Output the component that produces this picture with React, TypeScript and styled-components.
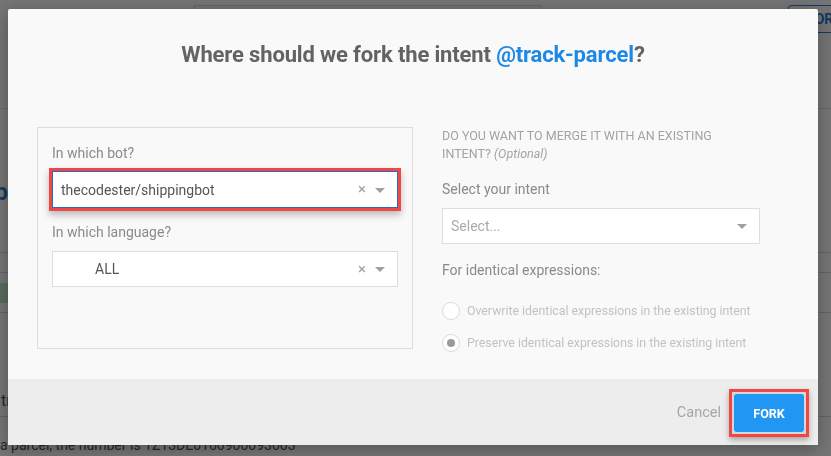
import React from "react";
import styled, { createGlobalStyle } from "styled-components";

const Global = createGlobalStyle`
  html, body { margin: 0; padding: 0; }
  body {
    width: 831px;
    height: 456px;
    overflow: hidden;
    background: #ffffff;
    font-family: Roboto, "Noto Sans", Arial, sans-serif;
  }
`;

/* ---------- background page (under the overlay) ---------- */

const Page = styled.div`
  width: 831px;
  height: 456px;
  background: #ffffff;
  display: flex;
  flex-direction: column;
  overflow: hidden;
`;

const PageHeader = styled.div`
  display: flex;
  align-items: flex-start;
  height: 118px;
  padding-top: 5px;
  box-sizing: border-box;
  border-bottom: 1px solid #e4e4e4;
  background: #fdfdfd;
`;

const HeaderLeft = styled.div`
  width: 194px;
  margin-left: -60px;
  display: flex;
  flex-direction: column;
  gap: 8px;
`;

const PageTitle = styled.div`
  font-size: 24px;
  font-weight: 700;
  color: #2a7fd0;
  line-height: 30px;
`;

const PageSub = styled.div`
  font-size: 14px;
  color: #777;
  line-height: 18px;
`;

const SearchBox = styled.div`
  margin-left: 60px;
  width: 347px;
  height: 40px;
  border: 1px solid #dcdcdc;
  box-sizing: border-box;
`;

const OutlineButton = styled.div`
  margin-left: auto;
  margin-right: -40px;
  width: 83px;
  height: 28px;
  border: 1px solid #2a7fd0;
  border-radius: 3px;
  color: #2a7fd0;
  font-weight: 700;
  font-size: 14px;
  display: flex;
  align-items: center;
  padding-left: 18px;
  box-sizing: border-box;
`;

const PageBody = styled.div`
  display: flex;
  flex-direction: column;
  padding-top: 68px;
  margin-left: -40px;
`;

const SectionTitle = styled.div`
  font-size: 24px;
  font-weight: 700;
  color: #2a7fd0;
  line-height: 30px;
`;

const SectionSub = styled.div`
  font-size: 16px;
  color: #777;
  margin-top: 2px;
  line-height: 20px;
`;

const Row = styled.div<{ $h: number; $align?: string }>`
  height: ${(p) => p.$h}px;
  border-bottom: 1px solid #d8d8d8;
  display: flex;
  align-items: ${(p) => p.$align ?? "center"};
  padding-left: 40px;
  font-size: 16px;
  color: #555;
  width: 900px;
  box-sizing: border-box;
`;

const RowText = styled.span`
  padding: 0 0 6px 1px;
`;

const Tag = styled.span`
  background: #c9e7c9;
  color: #3a6a3a;
  padding: 2px 10px;
  font-size: 14px;
`;

const BottomText = styled.div`
  font-size: 14px;
  color: #555;
  padding-left: 40px;
  line-height: 22px;
  margin-top: 17px;
  white-space: nowrap;
`;

const Overlay = styled.div`
  position: fixed;
  inset: 0;
  background: rgba(0, 0, 0, 0.54);
`;

/* ---------- modal ---------- */

const Modal = styled.div`
  position: fixed;
  left: 8px;
  top: 9px;
  width: 810px;
  height: 436px;
  background: #f9f9f9;
  border-radius: 2px;
  box-shadow: 0 4px 18px rgba(0, 0, 0, 0.3);
  display: flex;
  flex-direction: column;
`;

const ModalBody = styled.div`
  flex: 1;
  display: flex;
  flex-direction: column;
  padding: 33px 0 0 29px;
`;

const Title = styled.h2`
  margin: 0;
  font-size: 22px;
  line-height: 26px;
  font-weight: 700;
  color: #636363;
  text-align: center;
  padding-right: 29px;
  letter-spacing: -0.15px;
`;

const Accent = styled.span`
  color: #1e88e5;
`;

const Columns = styled.div`
  display: flex;
  margin-top: 59px;
  gap: 29px;
`;

const LeftBox = styled.div`
  width: 376px;
  height: 222px;
  box-sizing: border-box;
  border: 1px solid #dcdcdc;
  padding: 17px 14px 0 14px;
  display: flex;
  flex-direction: column;
`;

const FieldLabel = styled.div<{ $top?: number }>`
  font-size: 14px;
  line-height: 16px;
  color: #8a8a8a;
  margin-top: ${(p) => p.$top ?? 0}px;
`;

const SelectBox = styled.div<{ $focused?: boolean; $w?: number; $top?: number }>`
  width: ${(p) => p.$w ?? 346}px;
  height: ${(p) => (p.$focused ? 37 : 36)}px;
  margin-top: ${(p) => p.$top ?? 0}px;
  box-sizing: border-box;
  background: #ffffff;
  border: 1px solid ${(p) => (p.$focused ? "#1f6fc5" : "#dedede")};
  display: flex;
  align-items: center;
  padding: 0 12px 0 8px;
  box-shadow: ${(p) =>
    p.$focused
      ? "0 0 0 3px #f04646, 0 4px 7px 3px rgba(0,0,0,0.25)"
      : "none"};
`;

const SelectValue = styled.span<{ $indent?: number; $placeholder?: boolean }>`
  flex: 1;
  font-size: 14px;
  color: ${(p) => (p.$placeholder ? "#aaaaaa" : "#555555")};
  padding-left: ${(p) => p.$indent ?? 0}px;
`;

const Clear = styled.span`
  font-size: 15px;
  color: #a0a0a0;
  margin-right: 9px;
  line-height: 1;
`;

const Arrow = styled.span`
  width: 0;
  height: 0;
  border-left: 5px solid transparent;
  border-right: 5px solid transparent;
  border-top: 5px solid #a0a0a0;
  margin-top: 1px;
`;

const RightCol = styled.div`
  width: 318px;
  display: flex;
  flex-direction: column;
`;

const MergeHeading = styled.div`
  font-size: 12.5px;
  line-height: 18px;
  color: #a3a3a3;
  text-transform: uppercase;
`;

const Optional = styled.i`
  text-transform: none;
`;

const RadioRow = styled.div<{ $top: number }>`
  display: flex;
  align-items: center;
  gap: 7px;
  margin-top: ${(p) => p.$top}px;
`;

const RadioCircle = styled.span<{ $checked?: boolean }>`
  width: 18px;
  height: 18px;
  box-sizing: border-box;
  border-radius: 50%;
  border: 1px solid #dadada;
  background: #ffffff;
  display: flex;
  align-items: center;
  justify-content: center;
  &::after {
    content: "";
    width: 8px;
    height: 8px;
    border-radius: 50%;
    background: #9a9a9a;
    display: ${(p) => (p.$checked ? "block" : "none")};
  }
`;

const RadioText = styled.span`
  font-size: 12.3px;
  color: #c2c2c2;
`;

const Footer = styled.div`
  height: 66px;
  background: #ededed;
  display: flex;
  align-items: center;
  justify-content: flex-end;
  padding-right: 9px;
  gap: 8px;
`;

const CancelButton = styled.span`
  font-size: 14.5px;
  color: #a6a6a6;
  margin-top: 1px;
`;

const HighlightFrame = styled.div`
  border: 3px solid #f04646;
  padding: 2px;
  background: #d6d6d6;
  box-shadow: 0 3px 6px rgba(0, 0, 0, 0.3);
  margin-top: 2px;
`;

const PrimaryButton = styled.button`
  width: 70px;
  height: 38px;
  border: none;
  border-radius: 3px;
  background: #2196f3;
  color: #ffffff;
  font-family: Roboto, Arial, sans-serif;
  font-weight: 700;
  font-size: 12.5px;
  display: block;
`;

export default function App() {
  return (
    <>
      <Global />
      <Page>
        <PageHeader>
          <HeaderLeft>
            <PageTitle>Forki</PageTitle>
            <PageSub>Intent</PageSub>
            <PageSub>user-</PageSub>
          </HeaderLeft>
          <SearchBox />
          <OutlineButton>FORK</OutlineButton>
        </PageHeader>
        <PageBody>
          <SectionTitle>Shipbot</SectionTitle>
          <SectionSub>Track</SectionSub>
          <Row $h={24} />
          <Row $h={20} />
          <Row $h={40}>
            <Tag>#</Tag>
          </Row>
          <Row $h={104} $align="flex-end">
            <RowText>track it</RowText>
          </Row>
          <BottomText>a parcel, the number is 1Z13DE0160900093003</BottomText>
        </PageBody>
      </Page>
      <Overlay />
      <Modal>
        <ModalBody>
          <Title>
            Where should we fork the intent <Accent>@track-parcel</Accent>?
          </Title>
          <Columns>
            <LeftBox>
              <FieldLabel>In which bot?</FieldLabel>
              <SelectBox $focused $top={10}>
                <SelectValue>thecodester/shippingbot</SelectValue>
                <Clear>×</Clear>
                <Arrow />
              </SelectBox>
              <FieldLabel $top={16}>In which language?</FieldLabel>
              <SelectBox $top={11}>
                <SelectValue $indent={34}>ALL</SelectValue>
                <Clear>×</Clear>
                <Arrow />
              </SelectBox>
            </LeftBox>
            <RightCol>
              <MergeHeading>
                Do you want to merge it with an existing intent? <Optional>(Optional)</Optional>
              </MergeHeading>
              <FieldLabel $top={18}>Select your intent</FieldLabel>
              <SelectBox $w={318} $top={11}>
                <SelectValue $placeholder>Select...</SelectValue>
                <Arrow />
              </SelectBox>
              <FieldLabel $top={18}>For identical expressions:</FieldLabel>
              <RadioRow $top={24}>
                <RadioCircle />
                <RadioText>Overwrite identical expressions in the existing intent</RadioText>
              </RadioRow>
              <RadioRow $top={14}>
                <RadioCircle $checked />
                <RadioText>Preserve identical expressions in the existing intent</RadioText>
              </RadioRow>
            </RightCol>
          </Columns>
        </ModalBody>
        <Footer>
          <CancelButton>Cancel</CancelButton>
          <HighlightFrame>
            <PrimaryButton>FORK</PrimaryButton>
          </HighlightFrame>
        </Footer>
      </Modal>
    </>
  );
}
